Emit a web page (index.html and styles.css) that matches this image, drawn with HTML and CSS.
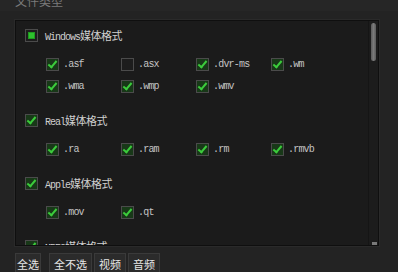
FILE: index.html
```html
<!DOCTYPE html>
<html>
<head>
<meta charset="utf-8">
<link rel="stylesheet" href="styles.css">
</head>
<body>
<div class="title"><span class="title-text">文件类型</span></div>
<div class="panel">
  <div class="content">
    <div class="group">
      <div class="head"><span class="cb partial"></span><span class="lbl">Windows<span class="cjk">媒体格式</span></span></div>
      <div class="items">
        <div class="item"><span class="cb on"></span><span class="ext">.asf</span></div>
        <div class="item"><span class="cb"></span><span class="ext">.asx</span></div>
        <div class="item"><span class="cb on"></span><span class="ext">.dvr-ms</span></div>
        <div class="item"><span class="cb on"></span><span class="ext">.wm</span></div>
        <div class="item"><span class="cb on"></span><span class="ext">.wma</span></div>
        <div class="item"><span class="cb on"></span><span class="ext">.wmp</span></div>
        <div class="item"><span class="cb on"></span><span class="ext">.wmv</span></div>
      </div>
    </div>
    <div class="group">
      <div class="head"><span class="cb on"></span><span class="lbl">Real<span class="cjk">媒体格式</span></span></div>
      <div class="items">
        <div class="item"><span class="cb on"></span><span class="ext">.ra</span></div>
        <div class="item"><span class="cb on"></span><span class="ext">.ram</span></div>
        <div class="item"><span class="cb on"></span><span class="ext">.rm</span></div>
        <div class="item"><span class="cb on"></span><span class="ext">.rmvb</span></div>
      </div>
    </div>
    <div class="group">
      <div class="head"><span class="cb on"></span><span class="lbl">Apple<span class="cjk">媒体格式</span></span></div>
      <div class="items">
        <div class="item"><span class="cb on"></span><span class="ext">.mov</span></div>
        <div class="item"><span class="cb on"></span><span class="ext">.qt</span></div>
      </div>
    </div>
    <div class="group">
      <div class="head"><span class="cb on"></span><span class="lbl">MPEG<span class="cjk">媒体格式</span></span></div>
    </div>
  </div>
  <div class="scroll"><div class="thumb"></div><div class="grip"></div></div>
</div>
<div class="buttons">
  <button class="btn btn-first">全选</button>
  <button class="btn">全不选</button>
  <button class="btn">视频</button>
  <button class="btn">音频</button>
</div>
</body>
</html>
```

FILE: styles.css
```css
html, body {
  margin: 0;
  padding: 0;
}
body {
  width: 398px;
  height: 272px;
  overflow: hidden;
  background: #232323;
  font-family: "Liberation Mono", "Noto Sans CJK SC", monospace;
}
.title {
  height: 11px;
  overflow: hidden;
  padding-left: 15px;
  background: #262626;
}
.title-text {
  display: block;
  margin-top: -6px;
  font-family: "Noto Sans CJK SC", sans-serif;
  font-size: 12px;
  line-height: 14px;
  color: #7a7a7a;
}
.panel {
  margin: 9px 19px 0 15px;
  height: 224px;
  border: 1px solid #0f0f0f;
  background: #1b1b1b;
  display: flex;
  box-shadow: 0 0 0 1px #2a2a2a;
}
.content {
  flex: 1;
  overflow: hidden;
  padding: 7px 0 0 9px;
}
.group {
  margin-bottom: 20px;
}
.head {
  display: flex;
  align-items: center;
  height: 14px;
  gap: 7px;
}
.lbl {
  font-size: 10px;
  letter-spacing: -1px;
  color: #cfcfcf;
}
.cjk {
  font-family: "Noto Sans CJK SC", sans-serif;
  font-size: 11px;
  letter-spacing: -0.5px;
}
.items {
  display: grid;
  grid-template-columns: repeat(4, 75px);
  row-gap: 8px;
  margin: 15px 0 0 21px;
}
.item {
  display: flex;
  align-items: center;
  height: 14px;
  gap: 4px;
}
.ext {
  font-size: 10px;
  letter-spacing: -0.8px;
  color: #c4c4c4;
}
.cb {
  width: 11px;
  height: 11px;
  border: 1px solid #4b4b4b;
  background: #1d1d1d;
  flex: none;
  position: relative;
}
.cb.on {
  background: #183818;
}
.cb.on::after {
  content: "";
  position: absolute;
  left: 3px;
  top: 0px;
  width: 3px;
  height: 7px;
  border: solid #3ccc3c;
  border-width: 0 2px 2px 0;
  transform: rotate(40deg);
}
.cb.partial::after {
  content: "";
  position: absolute;
  left: 2px;
  top: 2px;
  width: 7px;
  height: 7px;
  background: #2ec02e;
  box-shadow: inset 0 0 0 1px #1f9a1f;
}
.scroll {
  width: 9px;
  flex: none;
  background: #1c1c1c;
  border-left: 1px solid #151515;
  position: relative;
}
.thumb {
  margin: 2px 0 0 2px;
  width: 5px;
  height: 38px;
  border-radius: 3px;
  background: linear-gradient(to right, #5a5a5a, #7a7a7a, #5a5a5a);
}
.grip {
  position: absolute;
  right: 1px;
  bottom: 0;
  width: 5px;
  height: 3px;
  background: #7a7a7a;
}
.buttons {
  display: flex;
  gap: 2px;
  margin: 7px 0 0 15px;
}
.btn {
  height: 22px;
  padding: 0 4px;
  border: 1px solid #3a3a3a;
  background: #2b2b2b;
  color: #e6e6e6;
  font-family: "Noto Sans CJK SC", sans-serif;
  font-size: 11px;
  line-height: 18px;
}
.btn-first {
  padding: 0 1px;
  margin-right: 6px;
}
```
